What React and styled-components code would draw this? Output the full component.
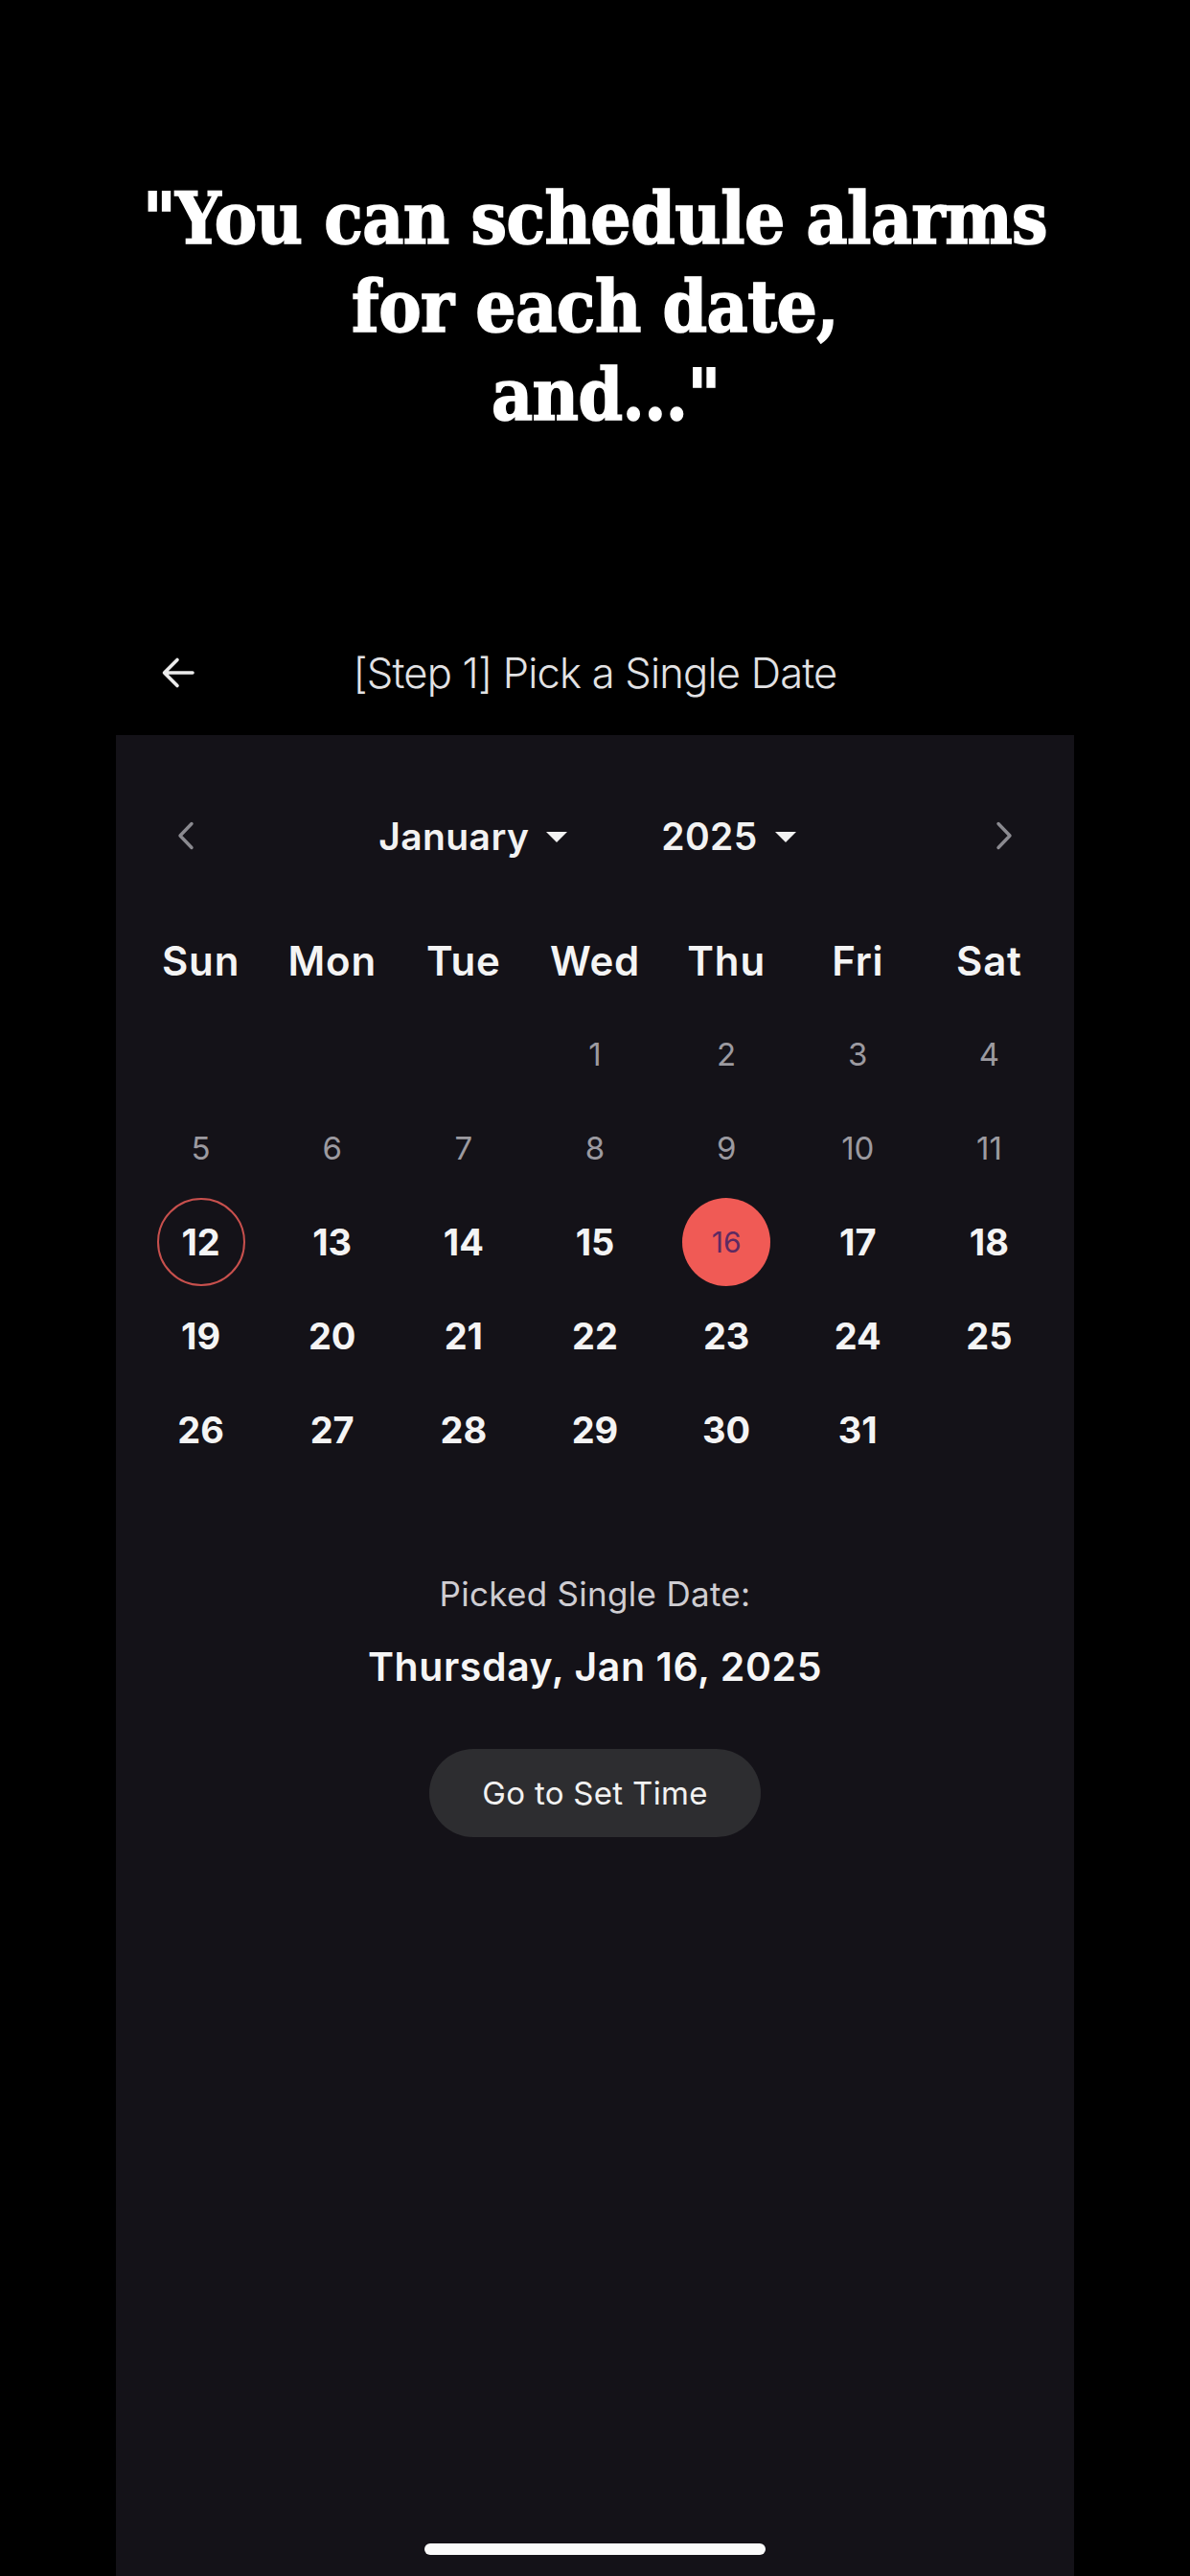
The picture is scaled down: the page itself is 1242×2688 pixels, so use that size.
import styled, { createGlobalStyle } from "styled-components";

const GlobalStyle = createGlobalStyle`
  html, body {
    margin: 0;
    padding: 0;
    background: #000;
  }
  body {
    font-family: Inter, "Noto Sans", "Liberation Sans", sans-serif;
    color: #fff;
  }
`;

const WEEKDAYS = ["Sun", "Mon", "Tue", "Wed", "Thu", "Fri", "Sat"];

// January 2025 starts on a Wednesday
const buildDays = () => {
  const cells = [null, null, null];
  for (let d = 1; d <= 31; d++) cells.push(d);
  while (cells.length % 7) cells.push(null);
  return cells;
};

const TODAY = 12;
const PICKED = 16;

const App = () => {
  const days = buildDays();

  return (
    <>
      <GlobalStyle />
      <Page>
        <Caption>
          "You can schedule alarms
          <br />
          for each date,
          <br />
          {"\u00a0and...\""}
        </Caption>

        <Screen>
          <Header>
            <BackButton aria-label="back">
              <svg width="38" height="38" viewBox="0 0 38 38" fill="none">
                <path
                  d="M34 19H5M18 5.5L4.5 19L18 32.5"
                  stroke="#ececec"
                  strokeWidth="3.6"
                  strokeLinecap="round"
                  strokeLinejoin="round"
                />
              </svg>
            </BackButton>
            <HeaderTitle>[Step 1] Pick a Single Date</HeaderTitle>
            <span />
          </Header>

          <Panel>
            <NavRow>
              <ChevronButton aria-label="previous month">
                <svg width="18" height="30" viewBox="0 0 18 30" fill="none">
                  <path
                    d="M15 2.5L3 15L15 27.5"
                    stroke="#8b8a90"
                    strokeWidth="3.4"
                    strokeLinecap="round"
                    strokeLinejoin="round"
                  />
                </svg>
              </ChevronButton>
              <Pickers>
                <Dropdown>
                  January
                  <Caret />
                </Dropdown>
                <Dropdown>
                  2025
                  <Caret />
                </Dropdown>
              </Pickers>
              <ChevronButton aria-label="next month">
                <svg width="18" height="30" viewBox="0 0 18 30" fill="none">
                  <path
                    d="M3 2.5L15 15L3 27.5"
                    stroke="#8b8a90"
                    strokeWidth="3.4"
                    strokeLinecap="round"
                    strokeLinejoin="round"
                  />
                </svg>
              </ChevronButton>
            </NavRow>

            <Grid>
              {WEEKDAYS.map((w) => (
                <WeekDay key={w}>{w}</WeekDay>
              ))}
              {days.map((d, i) => (
                <Cell key={i}>
                  {d && (
                    <Day
                      $past={d < TODAY}
                      $today={d === TODAY}
                      $picked={d === PICKED}
                    >
                      {d}
                    </Day>
                  )}
                </Cell>
              ))}
            </Grid>

            <Summary>
              <SummaryLabel>Picked Single Date:</SummaryLabel>
              <SummaryDate>Thursday, Jan 16, 2025</SummaryDate>
              <ActionButton>Go to Set Time</ActionButton>
            </Summary>

            <HomeIndicator />
          </Panel>
        </Screen>
      </Page>
    </>
  );
};

export default App;

const Page = styled.div`
  width: 1242px;
  min-height: 2688px;
  display: flex;
  flex-direction: column;
  align-items: center;
  background: #000;
`;

const Caption = styled.h1`
  margin: 0;
  padding-top: 182px;
  height: 637px;
  box-sizing: border-box;
  font-family: "DejaVu Serif Condensed", "DejaVu Serif", "Liberation Serif", serif;
  font-stretch: condensed;
  font-weight: 900;
  font-size: 74px;
  line-height: 92px;
  letter-spacing: -0.5px;
  -webkit-text-stroke: 1.5px #fff;
  text-align: center;
  color: #fff;
`;

const Screen = styled.div`
  width: 1000px;
  display: flex;
  flex-direction: column;
`;

const Header = styled.div`
  height: 130px;
  display: grid;
  grid-template-columns: 1fr auto 1fr;
  align-items: center;
  background: #000;
`;

const BackButton = styled.button`
  justify-self: start;
  margin-left: 46px;
  padding: 0;
  border: none;
  background: none;
  display: flex;
`;

const HeaderTitle = styled.div`
  font-family: Inter, "Liberation Sans", sans-serif;
  font-weight: 300;
  font-size: 43.5px;
  letter-spacing: -0.8px;
  color: #e2e2e4;
`;

const Panel = styled.div`
  min-height: 1921px;
  box-sizing: border-box;
  padding: 55px 20px 0;
  display: flex;
  flex-direction: column;
  background: #141218;
`;

const NavRow = styled.div`
  height: 100px;
  display: flex;
  align-items: center;
  justify-content: space-between;
  padding: 0 18px;
`;

const ChevronButton = styled.button`
  width: 70px;
  height: 70px;
  padding: 0;
  border: none;
  background: none;
  display: flex;
  align-items: center;
  justify-content: center;
`;

const Pickers = styled.div`
  display: flex;
  align-items: center;
  gap: 98px;
  margin-right: 16px;
`;

const Dropdown = styled.div`
  display: flex;
  align-items: center;
  gap: 18px;
  font-size: 39px;
  font-weight: 600;
  color: #f2f2f2;
  letter-spacing: 0.4px;
`;

const Caret = styled.span`
  width: 0;
  height: 0;
  border-left: 11px solid transparent;
  border-right: 11px solid transparent;
  border-top: 11px solid #f2f2f2;
  margin-top: 2px;
`;

const Grid = styled.div`
  margin-top: 31px;
  display: grid;
  grid-template-columns: repeat(7, 1fr);
  grid-auto-rows: 98px;
`;

const WeekDay = styled.div`
  display: flex;
  align-items: center;
  justify-content: center;
  font-size: 42px;
  font-weight: 600;
  color: #f4f4f4;
  letter-spacing: 0.8px;
`;

const Cell = styled.div`
  display: flex;
  align-items: center;
  justify-content: center;
`;

const Day = styled.div`
  width: 92px;
  height: 92px;
  box-sizing: border-box;
  border-radius: 50%;
  display: flex;
  align-items: center;
  justify-content: center;
  font-size: ${(p) => (p.$past ? "33px" : p.$picked ? "30px" : "38px")};
  font-weight: ${(p) => (p.$past || p.$picked ? 400 : 700)};
  color: ${(p) => (p.$past ? "#9c9aa0" : p.$picked ? "#5e2a62" : "#f4f4f4")};
  background: ${(p) => (p.$picked ? "#f05a55" : "transparent")};
  border: ${(p) => (p.$today ? "2.5px solid #c8504d" : "none")};
`;

const Summary = styled.div`
  margin-top: 101px;
  display: flex;
  flex-direction: column;
  align-items: center;
`;

const SummaryLabel = styled.div`
  font-size: 35px;
  font-weight: 400;
  color: #cfcdd2;
  letter-spacing: 0.3px;
`;

const SummaryDate = styled.div`
  margin-top: 30px;
  font-size: 41px;
  font-weight: 600;
  color: #f6f6f6;
  letter-spacing: 0.6px;
`;

const ActionButton = styled.button`
  margin-top: 61px;
  width: 346px;
  height: 92px;
  border: none;
  border-radius: 46px;
  background: #2d2d30;
  font-family: Inter, "Liberation Sans", sans-serif;
  font-size: 33px;
  font-weight: 400;
  color: #f2f2f2;
  letter-spacing: 0.3px;
`;

const HomeIndicator = styled.div`
  margin: auto auto 22px;
  width: 356px;
  height: 12px;
  border-radius: 6px;
  background: #fafafa;
`;
